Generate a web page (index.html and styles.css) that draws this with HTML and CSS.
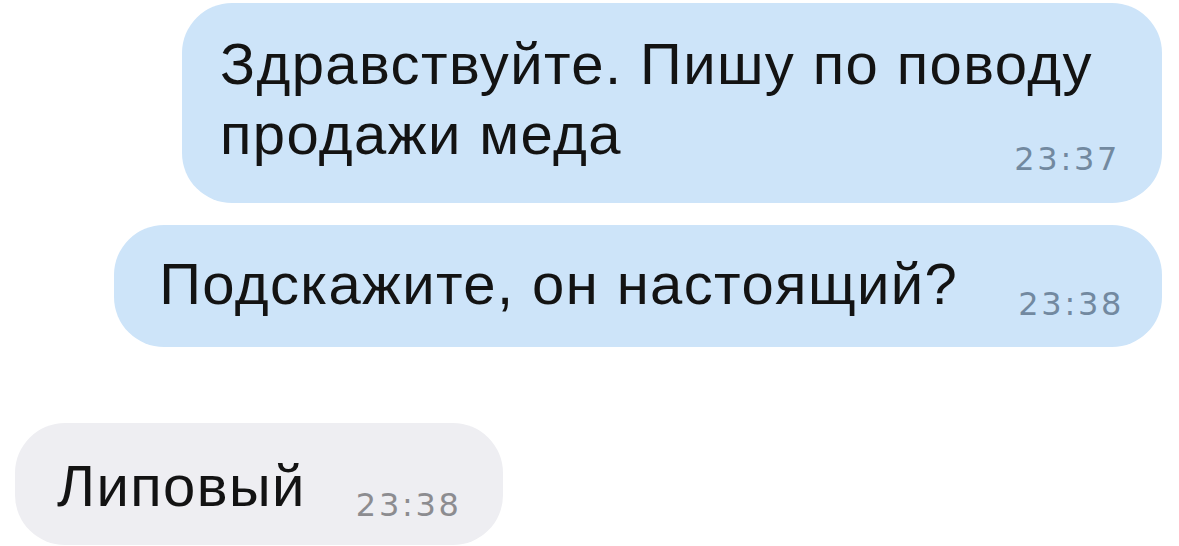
FILE: index.html
```html
<!DOCTYPE html>
<html lang="ru">
<head>
<meta charset="utf-8">
<title>Чат</title>
<link rel="stylesheet" href="styles.css">
</head>
<body>
<main class="chat">
  <div class="bubble out multi">
    <p class="text">Здравствуйте. Пишу по поводу<br>продажи меда <span class="time">23:37</span></p>
  </div>
  <div class="bubble out single">
    <p class="text">Подскажите, он настоящий?</p>
    <span class="time">23:38</span>
  </div>
  <div class="bubble in single">
    <p class="text">Липовый</p>
    <span class="time">23:38</span>
  </div>
</main>
</body>
</html>
```
FILE: styles.css
```css
* { box-sizing: border-box; }

html, body {
  margin: 0;
  background: #ffffff;
}

body {
  width: 1179px;
  height: 546px;
  overflow: hidden;
  font-family: "Liberation Sans", Arial, sans-serif;
  color: #131313;
}

.chat {
  display: flex;
  flex-direction: column;
  padding: 3px 17px 0 15px;
}

.bubble {
  border-radius: 50px;
}

.out {
  align-self: flex-end;
  background: #cde4f9;
}

.in {
  align-self: flex-start;
  background: #eeeef2;
  margin-top: 76px;
}

.text {
  margin: 0;
  font-size: 58px;
  line-height: 70px;
  letter-spacing: 1.4px;
}

.time {
  font-family: "DejaVu Sans", sans-serif;
  font-size: 32px;
  line-height: 40px;
  letter-spacing: 2.7px;
  color: #7289a0;
}

.in .time { color: #8c8c90; }

/* two-line message: the time floats into the bottom right corner */
.multi {
  width: 980px;
  height: 200px;
  padding: 26px 42px 34px 38px;
}

.multi .time {
  float: right;
  margin-top: 40px;
  margin-bottom: -40px;
}

/* one-line messages: text and time side by side */
.single {
  display: flex;
  align-items: flex-end;
  height: 122px;
  padding: 24px 38px 28px 45px;
}

.out.single { margin-top: 22px; }

.single .text { margin-right: 60px; }
.single .time { margin-bottom: -4.5px; }

.in.single {
  padding: 28px 41px 24px 42px;
}
.in.single .text { margin-right: 50px; }
.in.single .time { margin-bottom: -3.5px; }
```
